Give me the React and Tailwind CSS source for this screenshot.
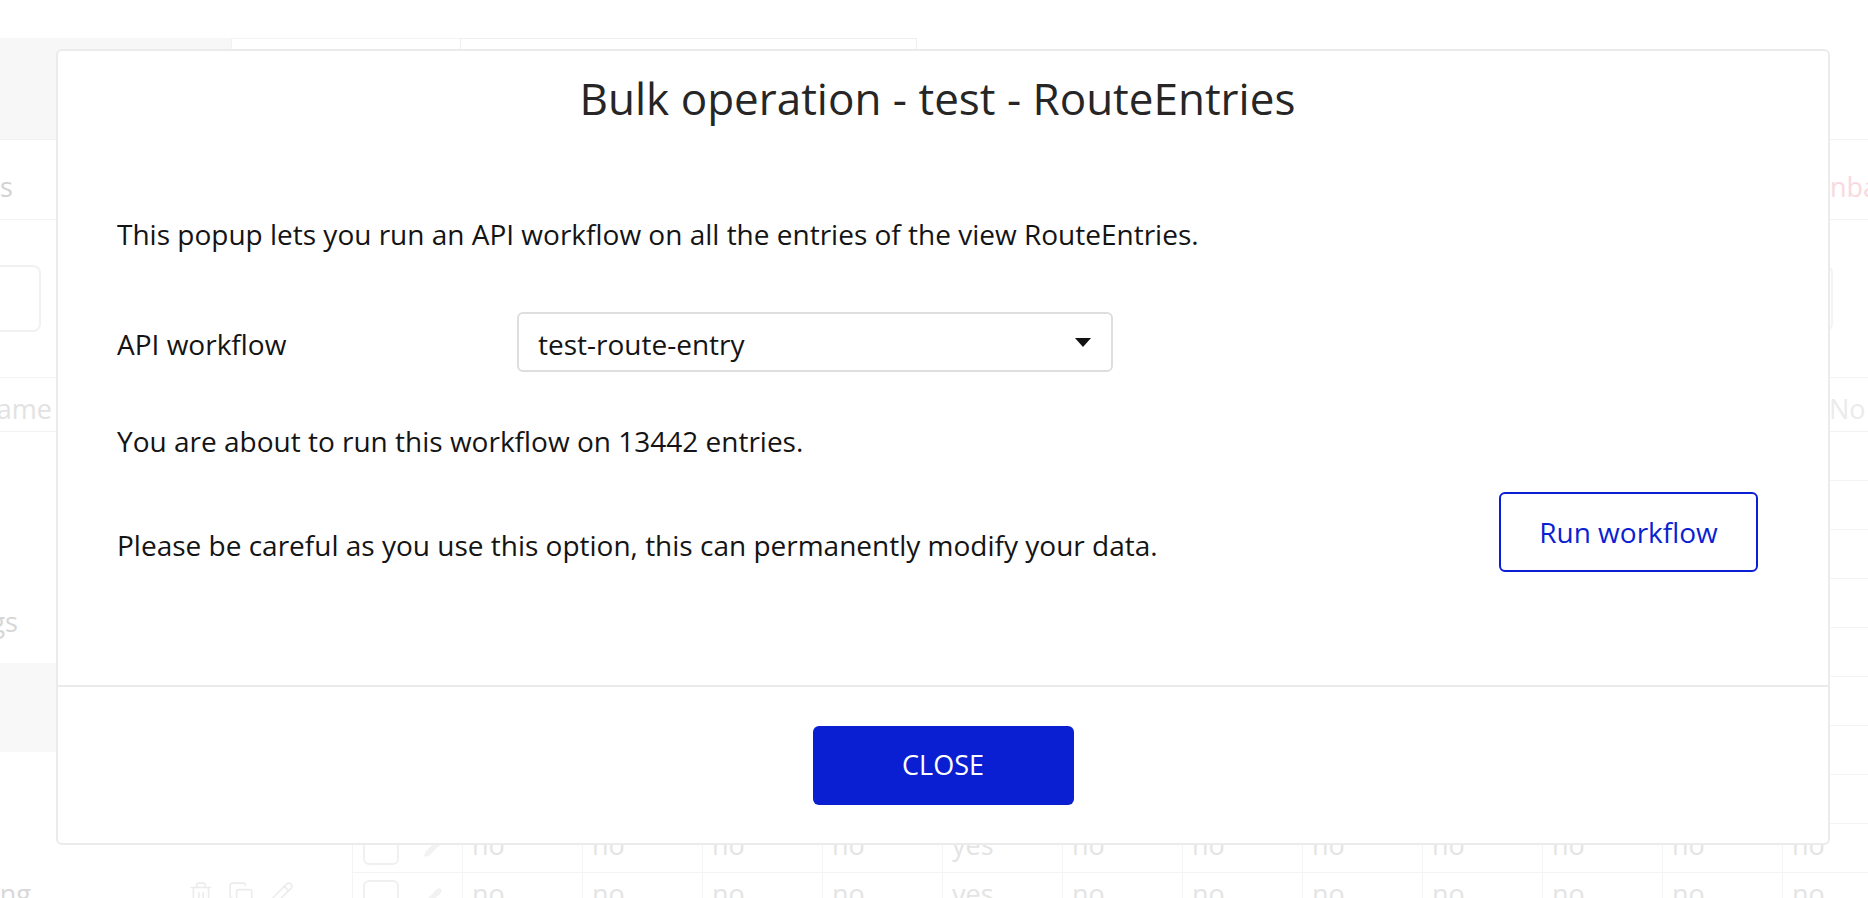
import { Trash2, Copy, Pencil } from "lucide-react";

const rowValues = ["no", "no", "no", "no", "yes", "no", "no", "no", "no", "no", "no", "no"];

function TableRow({ filled }) {
  return (
    <div className="flex h-[49px] shrink-0 border-b border-[#f4f4f4]">
      <div className="flex w-[110px] shrink-0 items-center gap-[24px] border-l border-[#f4f4f4] pl-[10px]">
        {filled && (
          <>
            <span className="h-[34px] w-[36px] rounded-[6px] border-2 border-[#f0f0f0]" />
            <Pencil size={20} className="text-[#f0f0f0]" fill="#f2f2f2" strokeWidth={1} />
          </>
        )}
      </div>
      {rowValues.map((v, i) => (
        <div
          key={i}
          className="flex w-[120px] shrink-0 items-center border-l border-[#f4f4f4] pb-[6px] pl-[9px] text-[27px] text-[#e4e4e4]"
        >
          {filled ? v : null}
        </div>
      ))}
    </div>
  );
}

function Background() {
  return (
    <div className="flex h-[898px] w-full flex-col overflow-hidden bg-white text-[#d4d4d4]">
      <div className="h-[38px] shrink-0" />
      {/* header band */}
      <div className="flex h-[102px] shrink-0 border-b border-[#f2f2f2]">
        <div className="w-[231px] shrink-0 bg-[#f7f7f7]" />
        <div className="w-[229px] shrink-0 border-l border-t border-[#f2f2f2]" />
        <div className="w-[457px] shrink-0 border-l border-r border-t border-[#eeeeee]" />
        <div className="flex-1" />
      </div>
      {/* tabs row */}
      <div className="flex h-[80px] shrink-0 items-center justify-between border-b border-[#f2f2f2] pt-[16px]">
        <div className="flex w-[13px] justify-end whitespace-nowrap text-[27px] text-[#d2d2d2]">Types</div>
        <div className="w-[38px] overflow-hidden whitespace-nowrap text-[27px] text-[#f8d9de]">nbatch</div>
      </div>
      {/* search row */}
      <div className="flex h-[158px] shrink-0 items-center justify-between border-b border-[#f2f2f2]">
        <div className="ml-[-20px] h-[67px] w-[61px] rounded-[8px] border-2 border-[#f1f1f1]" />
        <div className="mr-[35px] h-[67px] w-[60px] rounded-[8px] border-2 border-[#f4f4f4]" />
      </div>
      {/* header row */}
      <div className="flex h-[54px] shrink-0 items-center justify-between border-b border-[#f2f2f2] pt-[10px]">
        <div className="flex w-[52px] justify-end whitespace-nowrap text-[27px] text-[#e2e2e2]">Name</div>
        <div className="w-[39px] overflow-hidden whitespace-nowrap text-[27px] text-[#ebebeb]">No Entry</div>
      </div>
      <div className="flex min-h-0 flex-1">
        {/* left panel */}
        <div className="flex w-[352px] shrink-0 flex-col">
          <div className="h-[172px] shrink-0" />
          <div className="flex h-[36px] w-[18px] shrink-0 justify-end whitespace-nowrap text-[27px] leading-[36px] text-[#d6d6d6]">
            Settings
          </div>
          <div className="h-[23px] shrink-0" />
          <div className="h-[89px] shrink-0 bg-[#f8f8f8]" />
          <div className="h-[124px] shrink-0" />
          <div className="flex shrink-0 items-center">
            <div className="flex w-[31px] shrink-0 justify-end whitespace-nowrap text-[27px] leading-[36px] text-[#d8d8d8]">
              Routing
            </div>
            <div className="ml-[157px] flex items-center gap-[14px] text-[#ececec]">
              <Trash2 size={26} strokeWidth={1.5} />
              <Copy size={26} strokeWidth={1.5} />
              <Pencil size={26} strokeWidth={1.5} />
            </div>
          </div>
        </div>
        {/* table */}
        <div className="flex flex-col">
          {Array.from({ length: 10 }).map((_, i) => (
            <TableRow key={i} filled={i >= 8} />
          ))}
        </div>
      </div>
    </div>
  );
}

export default function App() {
  return (
    <div className="relative h-[898px] w-full overflow-hidden font-['Open_Sans',sans-serif]">
      <Background />
      <div className="absolute left-[56px] top-[49px] flex w-[1774px] flex-col rounded-[6px] border-2 border-[#ebebeb] bg-white">
        <div className="flex flex-col pb-[113px] pl-[59px] pr-[70px] pt-[21px]">
          <h2 className="text-center text-[44px] leading-[52px] text-[#262626]">
            Bulk operation - test - RouteEntries
          </h2>
          <p className="mt-[92px] text-[28px] leading-[36px] text-[#141414]">
            This popup lets you run an API workflow on all the entries of the view RouteEntries.
          </p>
          <div className="mt-[60px] flex items-center">
            <span className="mt-[3px] w-[400px] shrink-0 text-[28px] leading-[36px] text-[#141414]">API workflow</span>
            <div className="flex h-[60px] w-[596px] items-center justify-between rounded-[6px] border-2 border-[#dedede] pl-[19px] pr-[20px]">
              <span className="mt-[3px] text-[28px] leading-[36px] text-[#141414]">test-route-entry</span>
              <svg width="16" height="9" viewBox="0 0 16 9">
                <path d="M0 0 H16 L8 9 Z" fill="#111" />
              </svg>
            </div>
          </div>
          <p className="mt-[51px] text-[28px] leading-[36px] text-[#141414]">
            You are about to run this workflow on 13442 entries.
          </p>
          <div className="mt-[33px] flex items-end justify-between">
            <p className="mb-[9px] text-[28px] leading-[36px] text-[#141414]">
              Please be careful as you use this option, this can permanently modify your data.
            </p>
            <button className="flex h-[80px] w-[259px] items-center justify-center rounded-[6px] border-2 border-[#0b1fd2] text-[28px] text-[#0b1fd2]">
              Run workflow
            </button>
          </div>
        </div>
        <div className="flex justify-center border-t-2 border-[#ebebeb] pb-[38px] pt-[39px]">
          <button className="flex h-[79px] w-[261px] items-center justify-center rounded-[6px] bg-[#0a1fd1] text-[27px] text-white">
            CLOSE
          </button>
        </div>
      </div>
    </div>
  );
}
